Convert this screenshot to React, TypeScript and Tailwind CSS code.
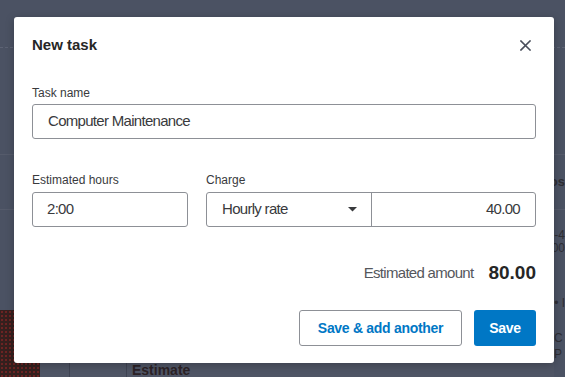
const font = { fontFamily: '"Liberation Sans", Arial, sans-serif' }

function Backdrop() {
  return (
    <div className="flex h-full w-full flex-col bg-[#4b5263]">
      <div className="h-[48px] border-b border-dashed border-[#5d6374]" />
      <div className="h-[107px] border-b border-[#555b6b]" />
      <div className="flex h-[55px] justify-end border-b border-[#555b6b]">
        <span className="mt-[20px] text-[13px] font-bold leading-[14px] text-[#2e2e34]">os</span>
      </div>
      <div className="flex h-[100px] flex-col items-end text-[12px] leading-[11px] text-[#2e2e34]">
        <span className="mt-[20px]">-4</span>
        <span className="mt-[2px]">00</span>
        <span className="mt-[44px]">• I</span>
      </div>
      <div className="flex flex-1">
        <div className="w-[40px] bg-[#35201e] [background-image:radial-gradient(#8a2626_0.6px,transparent_0.9px)] [background-size:4px_4px]" />
        <div className="flex flex-1 flex-col justify-end">
          <div className="flex h-[14px] items-end bg-[#4f5565]">
            <div className="h-full w-[30px] border-r border-[#3f4453]" />
            <div className="h-full w-[57px] border-r border-[#3f4453]" />
            <span className="ml-[5px] text-[14px] font-bold leading-[14px] text-[#2c2226]">Estimate</span>
          </div>
        </div>
        <div className="flex w-[11px] flex-col overflow-hidden text-[12px] leading-[16px] text-[#2e2e34]">
          <span className="mt-[20px]">C</span>
          <span>P</span>
        </div>
      </div>
    </div>
  )
}

export default function App() {
  return (
    <div className="relative h-[377px] w-full overflow-hidden" style={font}>
      <Backdrop />
      <div className="absolute left-[14px] top-[17px] flex h-[346px] w-[540px] flex-col rounded-[3px] bg-white px-[18px] pt-[19px] pb-[17px] shadow-[0_2px_8px_rgba(0,0,0,0.25)]">
        <div className="flex h-[18px] items-center justify-between">
          <h2 className="text-[15px] font-bold text-[#262626]">New task</h2>
          <svg className="mr-[5px]" width="11" height="11" viewBox="0 0 11 11">
            <path d="M1 1l9 9M10 1l-9 9" stroke="#4a4f5c" strokeWidth="1.6" strokeLinecap="square" />
          </svg>
        </div>

        <label className="mt-[31px] text-[12px] leading-[16px] text-[#393a3d]">Task name</label>
        <div className="mt-[3px] flex h-[35px] items-center rounded-[3px] border border-[#8d9096] px-[15px] text-[15px] tracking-[-0.7px] text-[#393a3d]">
          Computer Maintenance
        </div>

        <div className="mt-[33px] flex gap-[18px]">
          <div className="flex w-[156px] flex-col">
            <label className="text-[12px] leading-[16px] text-[#393a3d]">Estimated hours</label>
            <div className="mt-[4px] flex h-[35px] items-center rounded-[3px] border border-[#8d9096] px-[14px] text-[15px] tracking-[-0.7px] text-[#393a3d]">
              2:00
            </div>
          </div>
          <div className="flex flex-1 flex-col">
            <label className="text-[12px] leading-[16px] text-[#393a3d]">Charge</label>
            <div className="mt-[4px] flex h-[35px] rounded-[3px] border border-[#8d9096] text-[15px] tracking-[-0.7px] text-[#393a3d]">
              <div className="flex w-[165px] items-center justify-between border-r border-[#8d9096] pl-[15px] pr-[14px]">
                <span>Hourly rate</span>
                <svg width="9" height="5" viewBox="0 0 9 5">
                  <path d="M0 0h9L4.5 4.5z" fill="#393a3d" />
                </svg>
              </div>
              <div className="flex flex-1 items-center justify-end pr-[15px]">40.00</div>
            </div>
          </div>
        </div>

        <div className="mt-[34px] flex h-[24px] items-center justify-end gap-[15px]">
          <span className="text-[15px] tracking-[-0.7px] text-[#55575c]">Estimated amount</span>
          <span className="text-[19px] font-bold text-[#262626]">80.00</span>
        </div>

        <div className="mt-auto flex justify-end gap-[12px]">
          <button className="h-[36px] w-[163px] rounded-[3px] border border-[#8d9096] bg-white text-[14px] font-bold tracking-[-0.3px] text-[#0077c5]">
            Save &amp; add another
          </button>
          <button className="h-[36px] w-[62px] rounded-[3px] bg-[#0077c5] text-[14px] font-bold tracking-[-0.3px] text-white">
            Save
          </button>
        </div>
      </div>
    </div>
  )
}
